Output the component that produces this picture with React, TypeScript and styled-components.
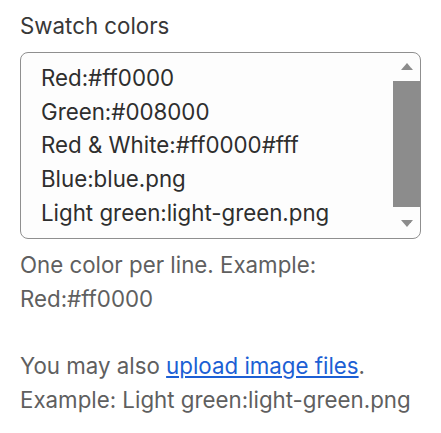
import React from "react";
import styled, { createGlobalStyle } from "styled-components";

const GlobalStyle = createGlobalStyle`
  html, body {
    margin: 0;
    padding: 0;
    background: #fff;
  }
  body {
    font-family: Inter, "Noto Sans", sans-serif;
  }
`;

const Panel = styled.div`
  padding: 9px 20px;
  font-size: 22.3px;
  line-height: 33.8px;
`;

const Label = styled.label`
  display: block;
  color: #383838;
  margin-bottom: 9px;
`;

const Field = styled.div`
  display: flex;
  height: 187px;
  box-sizing: border-box;
  border: 1px solid #8f8f8f;
  border-radius: 8px;
  background: #fdfdfd;
  overflow: hidden;
`;

const Input = styled.textarea`
  flex: 1;
  min-width: 0;
  margin: 0;
  padding: 8px 20px;
  border: 0;
  outline: 0;
  resize: none;
  background: transparent;
  font: inherit;
  color: #2e2e2e;
  overflow: hidden;
`;

const ScrollBar = styled.div`
  width: 27px;
  display: flex;
  flex-direction: column;
`;

const Arrow = styled.div<{ $dir: "up" | "down" }>`
  height: 28px;
  display: flex;
  align-items: center;
  justify-content: center;

  &::before {
    content: "";
    border-left: 6.5px solid transparent;
    border-right: 6.5px solid transparent;
    ${(p) =>
      p.$dir === "up"
        ? "border-bottom: 7px solid #8c8c8c;"
        : "border-top: 7px solid #8c8c8c;"}
  }
`;

const Track = styled.div`
  flex: 1;
  display: flex;
  flex-direction: column;
`;

const Thumb = styled.div`
  height: 126px;
  background: #8c8c8c;
`;

const Help = styled.p`
  margin: 9px 0 0;
  color: #5f5f5f;
`;

const HelpGap = styled(Help)`
  margin-top: 33.8px;
`;

const Link = styled.a`
  color: #1c5fd4;
  text-decoration: underline;
  text-decoration-thickness: 1.5px;
  text-underline-offset: 2px;
  cursor: pointer;
`;

const swatches = [
  "Red:#ff0000",
  "Green:#008000",
  "Red & White:#ff0000#fff",
  "Blue:blue.png",
  "Light green:light-green.png",
].join("\n");

export default function App() {
  return (
    <>
      <GlobalStyle />
      <Panel>
        <Label htmlFor="swatches">Swatch colors</Label>
        <Field>
          <Input id="swatches" defaultValue={swatches} spellCheck={false} />
          <ScrollBar>
            <Arrow $dir="up" />
            <Track>
              <Thumb />
            </Track>
            <Arrow $dir="down" />
          </ScrollBar>
        </Field>
        <Help>
          One color per line. Example:
          <br />
          Red:#ff0000
        </Help>
        <HelpGap>
          You may also <Link>upload image files</Link>.
          <br />
          Example: Light green:light-green.png
        </HelpGap>
      </Panel>
    </>
  );
}
